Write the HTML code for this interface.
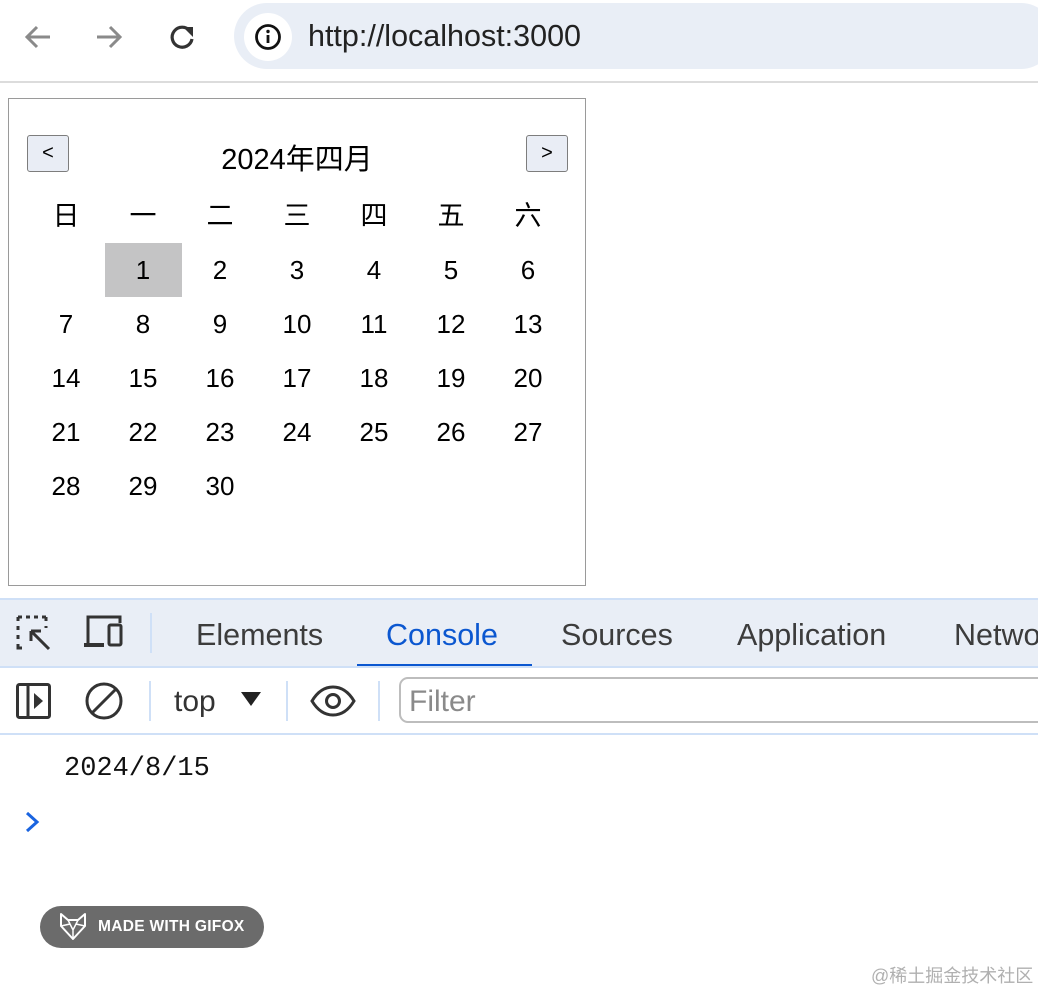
<!DOCTYPE html>
<html><head><meta charset="utf-8"><style>
*{margin:0;padding:0;box-sizing:border-box}
body{width:1038px;height:988px;position:relative;background:#fff;overflow:hidden;font-family:"Liberation Sans","Noto Sans CJK SC",sans-serif;color:#000}
.a{position:absolute}
.cal{left:8px;top:98px;width:578px;height:488px;border:1px solid #9a9a9a}
.btn{width:42px;height:37px;border:1px solid #7d7d7d;border-radius:3px;background:#e9edf5;font-size:20px;text-align:center;line-height:34px}
.cell{position:absolute;width:77px;height:54px;text-align:center;line-height:54px;font-size:26px}
.wd{font-size:27px}
.tab{position:absolute;top:618px;font-size:30.5px;color:#3c3c3c}
</style></head><body>
<svg class="a" style="left:22px;top:22px" width="32" height="30" viewBox="0 0 32 30"><path d="M28 15H6M15 5L5 15l10 10" stroke="#8a8a8a" stroke-width="3" fill="none"/></svg>
<svg class="a" style="left:93px;top:22px" width="32" height="30" viewBox="0 0 32 30"><path d="M4 15h22M17 5l10 10-10 10" stroke="#8a8a8a" stroke-width="3" fill="none"/></svg>
<svg class="a" style="left:167px;top:22px" width="30" height="30" viewBox="0 0 30 30"><path d="M23 9A10 10 0 1 0 25 17" stroke="#333" stroke-width="3.2" fill="none"/><path d="M16 5h10v10z" fill="#333"/></svg>
<div class="a" style="left:234px;top:3px;width:820px;height:66px;border-radius:33px;background:#e9eef6"></div>
<div class="a" style="left:244px;top:13px;width:48px;height:48px;border-radius:24px;background:#fff"></div>
<svg class="a" style="left:254px;top:23px" width="28" height="28" viewBox="0 0 28 28"><circle cx="14" cy="14" r="11.5" stroke="#111" stroke-width="2.8" fill="none"/><rect x="12.6" y="12" width="2.8" height="8" fill="#111"/><circle cx="14" cy="8.5" r="1.7" fill="#111"/></svg>
<div class="a" style="left:308px;top:19px;font-size:30.5px;color:#222">http://localhost:3000</div>
<div class="a" style="left:0;top:81px;width:1038px;height:2px;background:#dcdcdc"></div>

<div class="a cal"></div>
<div class="a btn" style="left:27px;top:135px">&lt;</div>
<div class="a btn" style="left:526px;top:135px">&gt;</div>
<div class="a" style="left:160px;top:136px;width:274px;text-align:center;font-size:29px">2024年四月</div>
<div class="a" style="left:105px;top:243px;width:77px;height:54px;background:#c4c4c5"></div>
<div id="g"></div>
<script>
var g=document.getElementById('g'),h='';
var wd=['日','一','二','三','四','五','六'];
for(var i=0;i<7;i++)h+='<div class="cell wd" style="left:'+(27.5+i*77)+'px;top:189px">'+wd[i]+'</div>';
for(var d=1;d<=30;d++){var p=d;var c=p%7,r=Math.floor(p/7);h+='<div class="cell" style="left:'+(27.5+c*77)+'px;top:'+(243+r*54)+'px">'+d+'</div>';}
g.innerHTML=h;
</script>

<div class="a" style="left:0;top:598px;width:1038px;height:69px;background:#e9eef6;border-top:2px solid #cfe0f7"></div>
<svg class="a" style="left:15px;top:613px" width="40" height="40" viewBox="0 0 40 40"><path d="M3 4h4M11 4h4M19 4h4M27 4h4M3 4v4M3 13v4M3 22v4M3 31v4h4M31 4v4M31 13v2" stroke="#333" stroke-width="3" fill="none"/><path d="M16 18L34 36M16 18h10M16 18v10" stroke="#333" stroke-width="3" fill="none"/></svg>
<svg class="a" style="left:82px;top:613px" width="44" height="40" viewBox="0 0 44 40"><path d="M6 30V4h32v6" stroke="#333" stroke-width="3" fill="none"/><path d="M2 32h20" stroke="#333" stroke-width="4"/><rect x="27" y="12" width="12" height="20" rx="1.5" stroke="#333" stroke-width="3" fill="none"/></svg>
<div class="a" style="left:150px;top:613px;width:2px;height:40px;background:#cfe0f7"></div>
<div class="tab" style="left:196px">Elements</div>
<div class="tab" style="left:386px;color:#0b57d0">Console</div>
<div class="a" style="left:357px;top:664px;width:175px;height:3px;background:#0b57d0"></div>
<div class="tab" style="left:561px">Sources</div>
<div class="tab" style="left:737px">Application</div>
<div class="tab" style="left:954px">Network</div>
<div class="a" style="left:0;top:666px;width:1038px;height:2px;background:#cfe0f7"></div>

<svg class="a" style="left:15px;top:682px" width="38" height="38" viewBox="0 0 38 38"><rect x="2.5" y="2.5" width="32" height="33" rx="2" stroke="#333" stroke-width="3" fill="none"/><path d="M13 3v32" stroke="#333" stroke-width="3"/><path d="M19 11l9 8-9 8z" fill="#333"/></svg>
<svg class="a" style="left:84px;top:681px" width="40" height="40" viewBox="0 0 40 40"><circle cx="20" cy="20" r="17" stroke="#333" stroke-width="3" fill="none"/><path d="M8 32L32 8" stroke="#333" stroke-width="3"/></svg>
<div class="a" style="left:149px;top:681px;width:2px;height:40px;background:#cfe0f7"></div>
<div class="a" style="left:174px;top:685px;font-size:30px;color:#333">top</div>
<svg class="a" style="left:240px;top:691px" width="22" height="16" viewBox="0 0 22 16"><path d="M1 1h20L11 15z" fill="#222"/></svg>
<div class="a" style="left:286px;top:681px;width:2px;height:40px;background:#cfe0f7"></div>
<svg class="a" style="left:310px;top:685px" width="46" height="32" viewBox="0 0 46 32"><path d="M2 16C8 6 15 2 23 2s15 4 21 14C38 26 31 30 23 30S8 26 2 16z" stroke="#333" stroke-width="3" fill="none"/><circle cx="23" cy="16" r="6.5" stroke="#333" stroke-width="3" fill="none"/></svg>
<div class="a" style="left:378px;top:681px;width:2px;height:40px;background:#cfe0f7"></div>
<div class="a" style="left:399px;top:677px;width:700px;height:46px;border:2px solid #bdbdbd;border-radius:9px"></div>
<div class="a" style="left:409px;top:685px;font-size:30px;color:#8a8a8a">Filter</div>
<div class="a" style="left:0;top:733px;width:1038px;height:2px;background:#cfe0f7"></div>

<div class="a" style="left:64px;top:754px;font-family:'Liberation Mono',monospace;font-size:27px;color:#111">2024/8/15</div>
<svg class="a" style="left:25px;top:811px" width="16" height="22" viewBox="0 0 16 22"><path d="M2 2l10 9-10 9" stroke="#1a64e0" stroke-width="3" fill="none"/></svg>

<div class="a" style="left:40px;top:906px;width:224px;height:42px;border-radius:21px;background:#6b6b6b"></div>
<svg class="a" style="left:58px;top:911px" width="30" height="30" viewBox="0 0 30 30"><path d="M3 3l7 6h10l7-6v12l-12 13L3 15z" stroke="#fff" stroke-width="2" fill="none" stroke-linejoin="round"/><path d="M3 15l9-2 3 6 3-6 9 2M10 9l2 4M20 9l-2 4M15 19v9" stroke="#fff" stroke-width="1.5" fill="none"/></svg>
<div class="a" style="left:98px;top:918px;font-size:15.5px;font-weight:bold;color:#fff;letter-spacing:0.3px">MADE WITH GIFOX</div>
<div class="a" style="left:871px;top:962px;font-size:18px;color:#b0b0b0">@稀土掘金技术社区</div>
</body></html>
